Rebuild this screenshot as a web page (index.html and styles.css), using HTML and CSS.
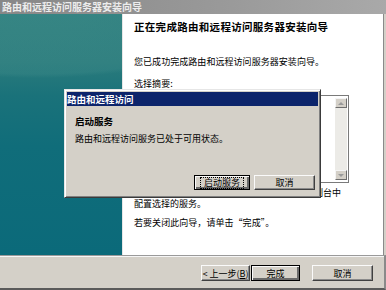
FILE: index.html
```html
<!DOCTYPE html>
<html lang="zh-CN">
<head>
<meta charset="utf-8">
<title>路由和远程访问服务器安装向导</title>
<link rel="stylesheet" href="styles.css">
</head>
<body>
<div class="window">
  <div class="titlebar">路由和远程访问服务器安装向导</div>
  <div class="main">
    <div class="side"></div>
    <div class="content">
      <h1 class="heading">正在完成路由和远程访问服务器安装向导</h1>
      <p class="text p1">您已成功完成路由和远程访问服务器安装向导。</p>
      <p class="text label">选择摘要:</p>
      <div class="listbox">
        <div class="list-body"></div>
        <div class="scrollbar">
          <div class="sb-btn"><span class="tri up"></span></div>
          <div class="sb-track"></div>
          <div class="sb-btn"><span class="tri down"></span></div>
        </div>
      </div>
      <p class="text p2">在您关闭此向导之后，请在路由和远程访问控制台中<br>配置选择的服务。</p>
      <p class="text p3">若要关闭此向导，请单击“完成”。</p>
    </div>
  </div>
  <div class="footer">
    <button class="btn back">&lt; 上一步(<u>B</u>)</button>
    <button class="btn finish default">完成</button>
    <button class="btn cancel">取消</button>
  </div>

  <div class="dialog">
    <div class="dlg-title">路由和远程访问</div>
    <div class="dlg-body">
      <p class="dlg-head">启动服务</p>
      <p class="dlg-text">路由和远程访问服务已处于可用状态。</p>
      <div class="dlg-buttons">
        <button class="btn dbtn default focus"><span>启动服务</span></button>
        <button class="btn dbtn">取消</button>
      </div>
    </div>
  </div>
</div>
</body>
</html>
```

FILE: styles.css
```css
* { box-sizing: border-box; }
html, body { margin: 0; padding: 0; }
body {
  width: 386px;
  height: 290px;
  overflow: hidden;
  background: #d4d0c8;
  font-family: "Noto Sans CJK SC", "Noto Sans", sans-serif;
  color: #000;
}
p, h1 { margin: 0; }

.window {
  position: relative;
  width: 386px;
  height: 290px;
  display: flex;
  flex-direction: column;
  background: #d4d0c8;
}

.titlebar {
  height: 14px;
  flex: none;
  background: linear-gradient(90deg, #878787 0%, #9a9a9a 60%, #a9a9a9 100%);
  color: #ececec;
  font-size: 10px;
  font-weight: bold;
  line-height: 14px;
  padding-left: 2px;
  white-space: nowrap;
  overflow: hidden;
}

.main {
  height: 241px;
  flex: none;
  display: flex;
  margin-right: 2px;
  border-right: 1px solid #8a8a8a;
}

.side {
  width: 123px;
  flex: none;
  border-right: 1px solid #e6e6e6;
  background:
    radial-gradient(ellipse 260px 80px at 30% 0px, rgba(66,142,140,0.45) 0%, rgba(66,142,140,0.3) 75%, rgba(66,142,140,0) 80%),
    linear-gradient(180deg, #2d7e7d 0%, #2a7b7c 20%, #1a727a 34%, #106d7a 55%, #0b6a7a 100%);
}

.content {
  flex: 1;
  background: #fff;
  padding-left: 11px;
  display: flex;
  flex-direction: column;
}

.heading {
  font-size: 10.5px;
  font-weight: bold;
  line-height: 12px;
  margin-top: 7px;
  white-space: nowrap;
  letter-spacing: 0.3px;
}

.text {
  font-size: 9px;
  line-height: 10px;
  white-space: nowrap;
  letter-spacing: 0.05px;
}
.p1 { margin-top: 24px; }
.label { margin-top: 12px; }

.listbox {
  margin-top: 6px;
  width: 215px;
  height: 88px;
  border: 1px solid #7a7a7a;
  display: flex;
  background: #fff;
}
.list-body { flex: 1; }
.scrollbar {
  width: 13px;
  display: flex;
  flex-direction: column;
  padding: 2px 1px 2px 0;
}
.sb-btn {
  height: 10px;
  background: #d4d0c8;
  border: 1px solid;
  border-color: #f4f4f4 #6e6e6e #6e6e6e #f4f4f4;
  display: flex;
  align-items: center;
  justify-content: center;
}
.sb-track { flex: 1; background: #ecebe7; }
.tri { width: 0; height: 0; border-left: 3px solid transparent; border-right: 3px solid transparent; }
.tri.up { border-bottom: 3px solid #9a9a9a; }
.tri.down { border-top: 3px solid #9a9a9a; }

.p2 { margin-top: 4px; line-height: 11px; letter-spacing: 0; }
.p3 { margin-top: 9px; }

.footer {
  flex: 1;
  border-top: 1px solid #9a9a9a;
  box-shadow: inset 0 1px 0 #f6f6f6;
  border-bottom: 2px solid #5a5a5a;
  border-right: 2px solid #8a8a8a;
  display: flex;
  align-items: flex-start;
  padding-top: 9px;
  padding-left: 201px;
}

.btn {
  font-family: "Noto Sans CJK SC", "Noto Sans", sans-serif;
  font-size: 9px;
  line-height: 13px;
  padding: 0;
  margin: 0;
  background: #d4d0c8;
  color: #000;
  border: 1px solid;
  border-color: #fafafa #404040 #404040 #fafafa;
  box-shadow: inset -1px -1px 0 #8a8a8a;
  height: 16px;
  display: flex;
  align-items: center;
  justify-content: center;
  white-space: nowrap;
}
.btn u { text-decoration: underline; }
.btn.default {
  border: 1px solid #000;
  box-shadow: inset 1px 1px 0 #fafafa, inset -2px -2px 0 #6a6a6a;
}
.back { width: 49px; }
.finish { width: 49px; margin-left: 1px; }
.cancel { width: 61px; margin-left: 12px; }

.dialog {
  position: absolute;
  left: 64px;
  top: 89px;
  width: 257px;
  height: 109px;
  background: #d4d0c8;
  border: 1px solid;
  border-color: #e6e6e6 #3a3a3a #3a3a3a #e6e6e6;
  box-shadow: inset 1px 1px 0 #fff, inset -1px -1px 0 #808080;
  padding: 2px;
  display: flex;
  flex-direction: column;
}
.dlg-title {
  height: 14px;
  background: #0c246b;
  color: #fff;
  font-size: 9.5px;
  font-weight: bold;
  line-height: 14px;
  white-space: nowrap;
}
.dlg-body {
  flex: 1;
  padding-left: 8px;
  display: flex;
  flex-direction: column;
}
.dlg-head {
  font-size: 9.5px;
  font-weight: bold;
  line-height: 10px;
  margin-top: 10px;
}
.dlg-text {
  font-size: 9px;
  line-height: 10px;
  margin-top: 8px;
  white-space: nowrap;
}
.dlg-buttons {
  margin-top: 31px;
  display: flex;
  padding-left: 119px;
  gap: 4px;
}
.dbtn { height: 15px; }
.dbtn:first-child { width: 56px; }
.dbtn:last-child { width: 61px; }
.btn.focus span {
  outline: 1px dotted #000;
  outline-offset: 0px;
  padding: 0 3px;
  line-height: 10px;
}
```
